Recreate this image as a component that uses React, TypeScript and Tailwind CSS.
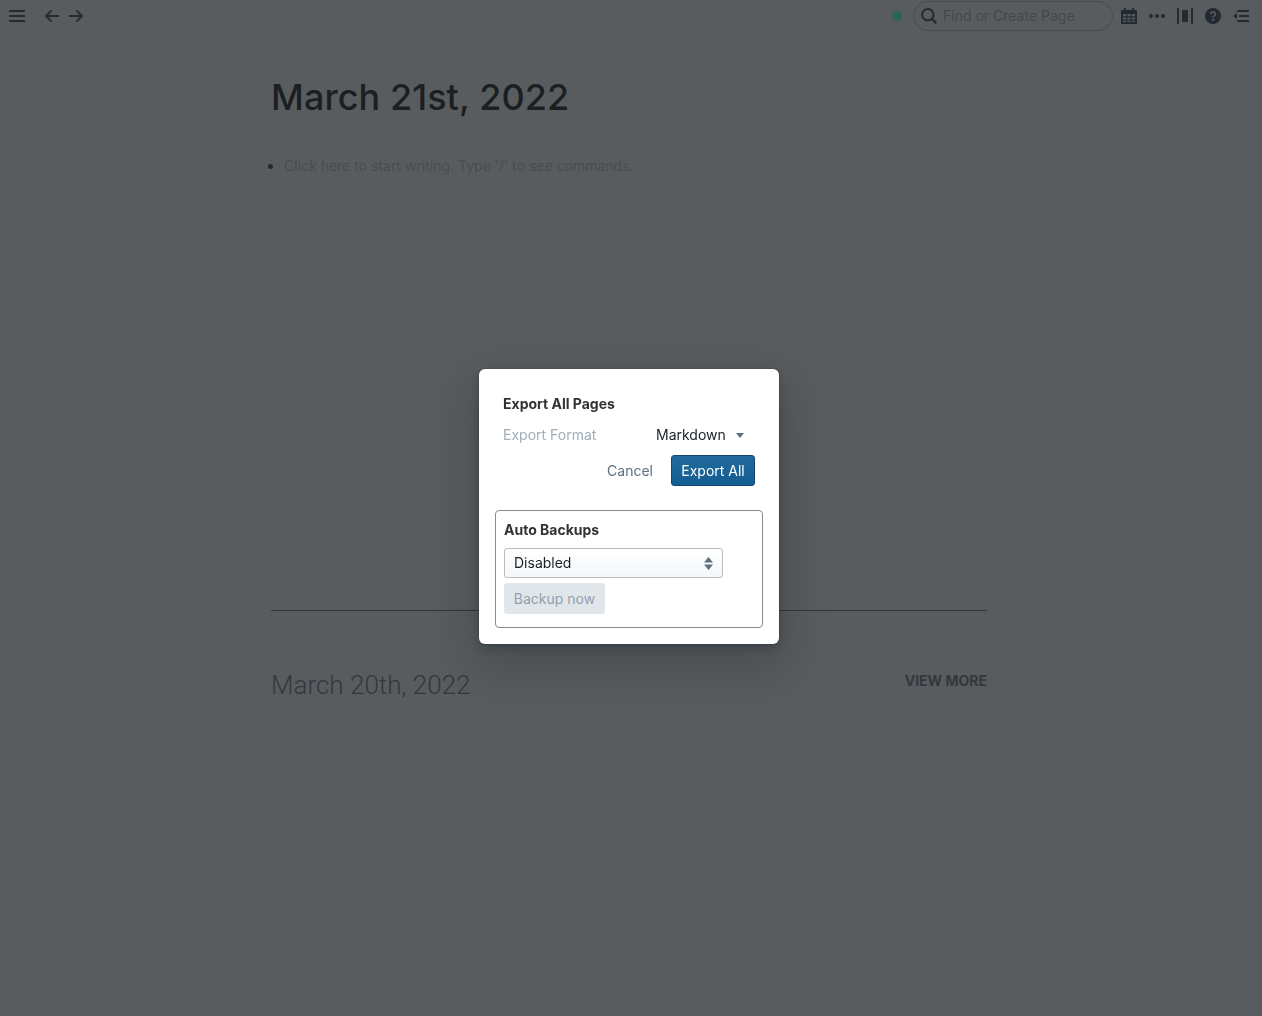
const inter = "font-['Inter','Noto_Sans',sans-serif]";
const ink = "#232a31";

function Menu() {
  return (
    <svg width="16" height="16" viewBox="0 0 16 16" fill={ink}>
      <rect x="0" y="2" width="16" height="2" rx="0.5" />
      <rect x="0" y="7" width="16" height="2" rx="0.5" />
      <rect x="0" y="12" width="16" height="2" rx="0.5" />
    </svg>
  );
}

function Arrow({ flip }: { flip?: boolean }) {
  return (
    <svg width="16" height="16" viewBox="0 0 16 16" fill="none" stroke={ink} strokeWidth="2" className={flip ? "rotate-180" : ""}>
      <path d="M15 8H2M7.500 2.500 2 8l5.500 5.500" />
    </svg>
  );
}

function Calendar() {
  return (
    <svg width="16" height="16" viewBox="0 0 16 16" fill={ink}>
      <path fillRule="evenodd" d="M3 0h2v2h6V0h2v2h2a1 1 0 0 1 1 1v12a1 1 0 0 1-1 1H1a1 1 0 0 1-1-1V3a1 1 0 0 1 1-1h2V0Zm-1 6v2.300h3.300V6H2Zm4.400 0v2.300h3.200V6H6.400Zm4.300 0v2.300H14V6h-3.300ZM2 9.400v2.200h3.300V9.400H2Zm4.400 0v2.200h3.200V9.400H6.400Zm4.300 0v2.200H14V9.400h-3.300ZM2 12.700V14h3.300v-1.300H2Zm4.400 0V14h3.200v-1.300H6.400Zm4.300 0V14H14v-1.300h-3.300Z" />
    </svg>
  );
}

function Dots() {
  return (
    <svg width="16" height="16" viewBox="0 0 16 16" fill={ink}>
      <circle cx="2" cy="8" r="2" />
      <circle cx="8" cy="8" r="2" />
      <circle cx="14" cy="8" r="2" />
    </svg>
  );
}

function Columns() {
  return (
    <svg width="16" height="16" viewBox="0 0 16 16" fill={ink}>
      <rect x="0" y="0" width="2" height="16" />
      <rect x="5" y="2" width="6" height="12" rx="1" />
      <rect x="14" y="0" width="2" height="16" />
    </svg>
  );
}

function Help() {
  return (
    <svg width="16" height="16" viewBox="0 0 16 16">
      <circle cx="8" cy="8" r="8" fill={ink} />
      <path d="M5.600 6.100C5.700 4.700 6.700 4 8 4c1.400 0 2.400.8 2.400 2 0 1.800-2.300 1.800-2.300 3.400" fill="none" stroke="#585c5f" strokeWidth="1.700" />
      <rect x="7.100" y="10.800" width="2" height="2" fill="#585c5f" />
    </svg>
  );
}

function Outline() {
  return (
    <svg width="16" height="16" viewBox="0 0 16 16" fill={ink}>
      <rect x="4" y="2" width="12" height="2" rx="0.5" />
      <rect x="6" y="7" width="10" height="2" rx="0.5" />
      <rect x="4" y="12" width="12" height="2" rx="0.5" />
      <path d="M0 8l4-3v6z" />
    </svg>
  );
}

function Search() {
  return (
    <svg width="16" height="16" viewBox="0 0 16 16" fill="none" stroke={ink} strokeWidth="2">
      <circle cx="6.800" cy="6.800" r="5.700" />
      <path d="m11 11 4.300 4.300" strokeWidth="2.400" />
    </svg>
  );
}

function Topbar() {
  return (
    <header className="flex h-8 items-center justify-between pl-[9px] pr-[13px]">
      <div className="flex items-center">
        <Menu />
        <div className="ml-[19px] flex items-center gap-2">
          <Arrow />
          <Arrow flip />
        </div>
      </div>
      <div className="flex items-center">
        <span className="h-[10px] w-[10px] rounded-full bg-[#2d6650]" />
        <div className="ml-[11px] flex h-[30px] w-[200px] items-center gap-[6px] rounded-full border border-[#484c50] pl-[7px]">
          <Search />
          <span className="text-sm text-[#44484c]">Find or Create Page</span>
        </div>
        <div className="ml-2 flex items-center gap-3">
          <Calendar />
          <Dots />
          <Columns />
          <Help />
          <Outline />
        </div>
      </div>
    </header>
  );
}

function Dialog() {
  return (
    <div className="fixed inset-0 flex items-center justify-center pb-[3px] pr-1">
      <div className="h-[275px] w-[300px] rounded-md bg-white px-4 pt-[26px] shadow-[0_0_0_1px_rgba(16,22,26,0.1),0_4px_8px_rgba(16,22,26,0.2),0_18px_46px_6px_rgba(16,22,26,0.2)]">
        <div className="px-2">
          <h2 className="text-sm font-bold leading-[18px] text-[#333333]">Export All Pages</h2>
          <div className="mt-3 flex h-5 items-center">
            <span className="w-[153px] text-sm text-[#a0aeb9]">Export Format</span>
            <span className="text-sm text-[#182026]">Markdown</span>
            <svg width="8" height="5" viewBox="0 0 8 5" fill="#5c7080" className="ml-[10px]">
              <path d="M0 0h8L4 5z" />
            </svg>
          </div>
          <div className="mt-[10px] flex items-center justify-end">
            <span className="mr-[18px] text-sm text-[#5c7080]">Cancel</span>
            <button className="h-[31px] w-[84px] rounded-[3px] border border-[#10466f] bg-gradient-to-b from-[#226a9d] to-[#125d92] text-sm text-white">
              Export All
            </button>
          </div>
        </div>
        <section className="mt-6 h-[118px] rounded border border-[#8a8a8a] px-2 pt-[10px]">
          <h3 className="text-sm font-bold leading-[18px] text-[#333333]">Auto Backups</h3>
          <div className="mt-[9px] flex h-[30px] w-[219px] items-center justify-between rounded-[3px] border border-[#b9bdc0] bg-gradient-to-b from-white to-[#f4f6f8] pl-[9px] pr-[9px]">
            <span className="text-sm text-[#182026]">Disabled</span>
            <svg width="9" height="13" viewBox="0 0 9 13" fill="#5c7080">
              <path d="M0 5.500 4.500 0 9 5.500zM0 7.500l4.500 5.500L9 7.500z" />
            </svg>
          </div>
          <button className="mt-[5px] h-[31px] w-[101px] rounded-[3px] bg-[#e1e6ea] text-sm text-[#93a1ad]">
            Backup now
          </button>
        </section>
      </div>
    </div>
  );
}

export default function App() {
  return (
    <div className={`${inter} relative min-h-[1016px] bg-[#585c5f]`}>
      <Topbar />
      <main className="mx-auto w-[716px] -translate-x-[2px]">
        <h1 className="mt-[38px] text-[36px] font-medium leading-[54px] tracking-[0.06px] text-[#1b1f22]">March 21st, 2022</h1>
        <div className="mt-8 flex h-5 items-center">
          <span className="ml-[-3px] h-[5px] w-[5px] rounded-full bg-[#24292e]" />
          <span className="ml-[11px] text-sm text-[#494d51]">Click here to start writing. Type '/' to see commands.</span>
        </div>
        <hr className="mt-[434px] border-[#33373a]" />
        <div className="mt-[60px] flex items-start justify-between">
          <h2 className="font-['Roboto',sans-serif] text-[26px] font-light leading-[28px] text-[#33383c]">March 20th, 2022</h2>
          <span className="text-sm font-bold leading-5 text-[#33383c]">VIEW MORE</span>
        </div>
      </main>
      <Dialog />
    </div>
  );
}
